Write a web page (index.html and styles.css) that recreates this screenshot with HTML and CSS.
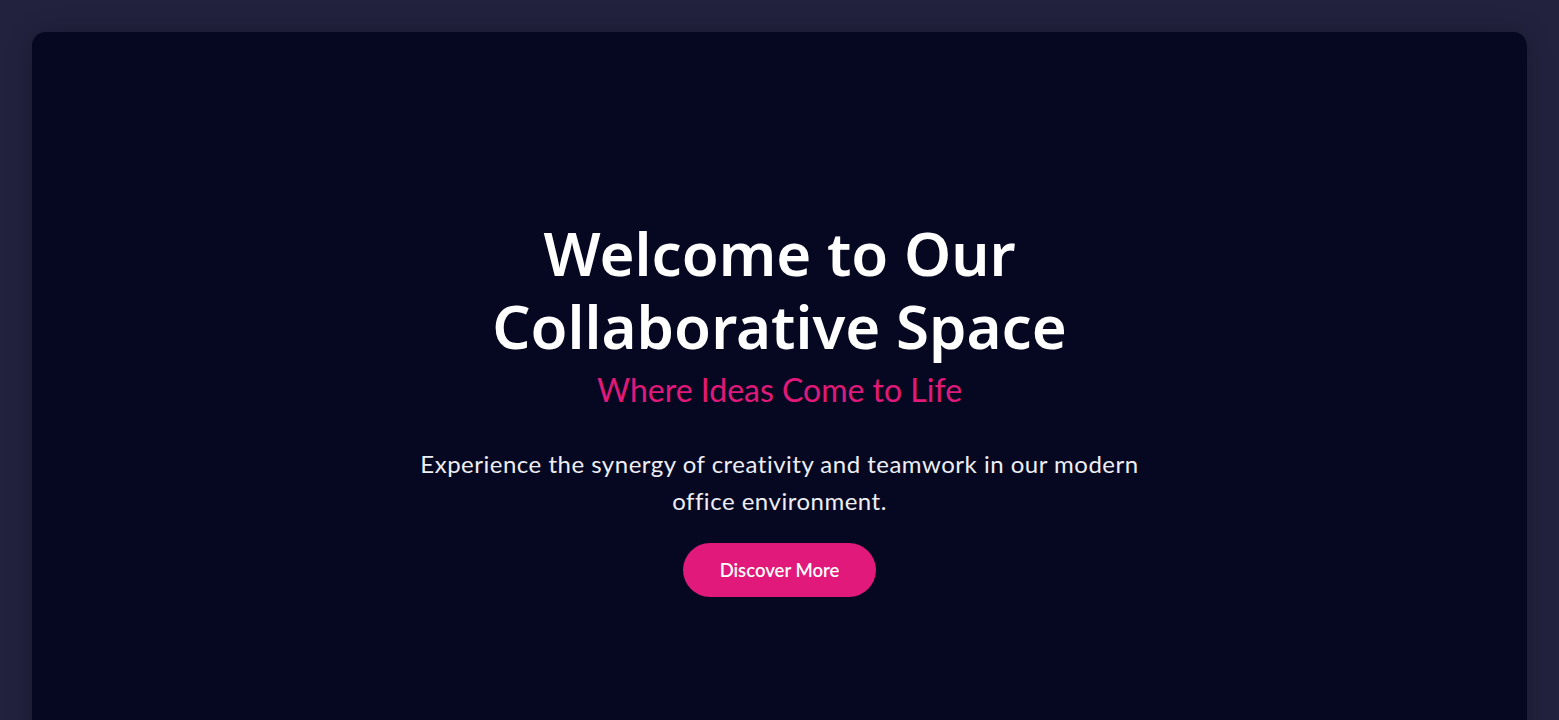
FILE: index.html
```html
<!DOCTYPE html>
<html lang="en">
<head>
<meta charset="utf-8">
<title>Collaborative Space</title>
<link rel="stylesheet" href="styles.css">
</head>
<body>
  <main class="card">
    <section class="hero">
      <h1 class="hero-title">Welcome to Our Collaborative Space</h1>
      <h2 class="hero-subtitle">Where Ideas Come to Life</h2>
      <p class="hero-text">Experience the synergy of creativity and teamwork in our modern office environment.</p>
      <a class="hero-button" href="#">Discover More</a>
    </section>
  </main>
</body>
</html>
```
FILE: styles.css
```css
* { box-sizing: border-box; }
html, body { margin: 0; }
body {
  background: #22223f;
  padding: 32px;
  font-family: "Lato", "Liberation Sans", sans-serif;
  color: #ffffff;
}
.card {
  background: #060822;
  border-radius: 14px;
  min-height: 760px;
  padding-top: 185px;
  box-shadow: 0 0 24px rgba(0, 0, 0, 0.25);
  display: flex;
  flex-direction: column;
  align-items: center;
}
.hero {
  display: flex;
  flex-direction: column;
  align-items: center;
  text-align: center;
}
.hero-title {
  margin: 0;
  max-width: 620px;
  font-family: "Noto Sans", "Lato", sans-serif;
  font-weight: 600;
  font-size: 60px;
  line-height: 73px;
  color: #ffffff;
}
.hero-subtitle {
  margin: 7px 0 0;
  font-weight: 400;
  font-size: 32px;
  line-height: 40px;
  color: #e0197a;
}
.hero-text {
  margin: 35px 0 0;
  max-width: 740px;
  font-size: 24px;
  letter-spacing: 0.5px;
  line-height: 37px;
  color: #eeeef4;
}
.hero-button {
  margin-top: 24px;
  display: inline-flex;
  align-items: center;
  justify-content: center;
  width: 193px;
  height: 54px;
  border-radius: 27px;
  background: #e0197a;
  color: #ffffff;
  text-decoration: none;
  font-size: 18.5px;
  font-weight: 600;
}
```
